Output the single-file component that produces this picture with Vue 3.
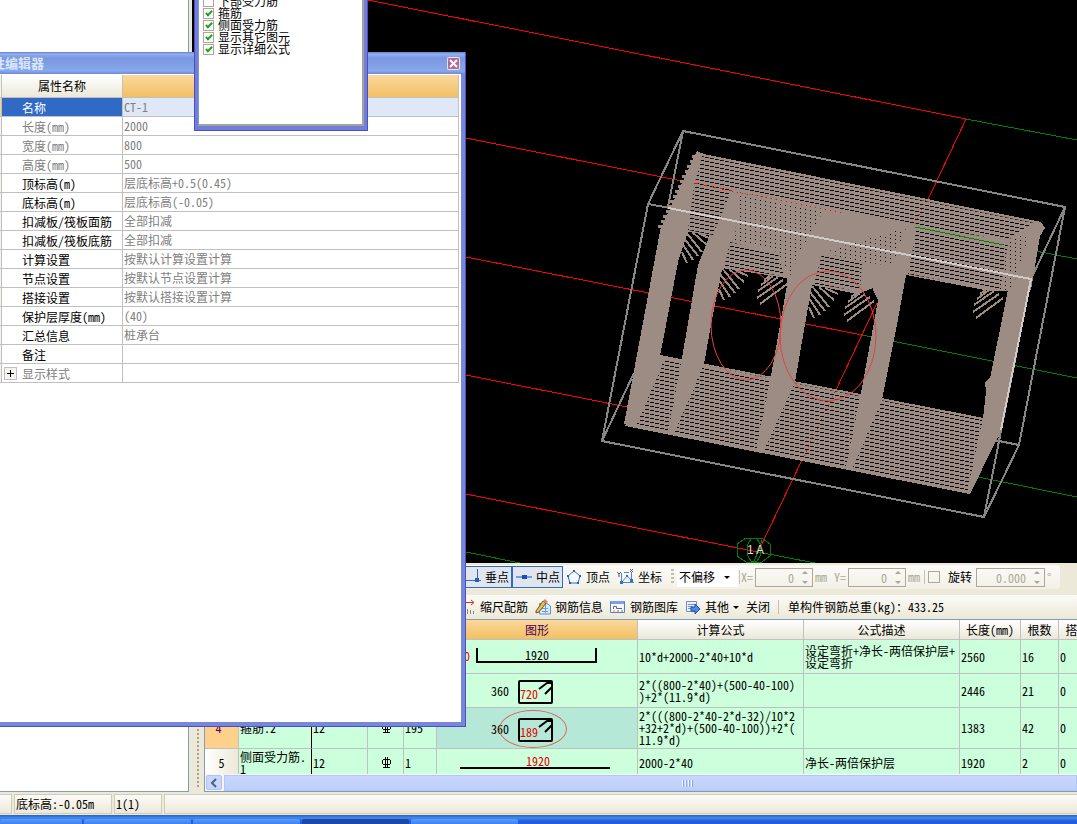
<template>
  <div class="desktop">
    <main class="workspace">
      <div class="tree-pane"></div>

      <div class="model-pane">
        <!-- 3D view -->
        <svg class="scene" viewBox="192 0 885 563" preserveAspectRatio="xMaxYMax slice" shape-rendering="crispEdges">
          <defs>
            <clipPath id="clip-base"><polygon points="660,357 983,420 968,492 628,424" /></clipPath>
            <clipPath id="clip-roof">
              <polygon points="702,156 1034,223 1008,240 915,226 732,189 713,235 688,230 694,186" />
              <polygon points="917,226 1008,244 1000,290 908,274" />
              <polygon points="730,242 778,254 784,276 724,268" />
              <polygon points="822,254 862,262 860,291 814,284" />
            </clipPath>
            <clipPath id="clip-dots">
              <polygon points="738,192 824,210 800,252 790,276 778,252 735,240" />
              <polygon points="906,228 892,266 838,258 830,250" />
              <polygon points="1002,244 1030,232 1012,290 1000,290" />
            </clipPath>
          </defs>

          <!-- axis grid -->
          <g class="axis red">
            <path d="M368 0L966 119L915 227" />
            <path d="M466 138L682 181" />
            <path d="M466 257L862 335M877 303L835 392" />
            <path d="M466 375L627 407" />
            <path d="M466 494L758 552L802 460" />
          </g>
          <g class="axis green">
            <path d="M966 119L1077 140M1004 245L1077 259M862 335L1077 378M978 477L1077 497M758 552L815 563M466 552L520 563" />
          </g>

          <!-- bounding box, far edges -->
          <path class="box" d="M683 131L1065 207L1019 445L984 517L602 441L648 204ZM683 131L668 207M634 373L602 441M1019 445L994 440M1031 279L1065 207M1031 279L984 517M648 204L670 208" />

          <!-- stirrups -->
          <g class="steel">
            <polygon points="660,355 984,418 970,494 625,426" />
            <polygon :points="roof" />
            <polygon v-for="leg in legs" :key="leg" :points="leg" />
            <path class="teeth" :d="teeth" />
            <path class="hooks" :d="hooks" />
          </g>
          <g clip-path="url(#clip-base)">
            <path v-for="y in baseRows" :key="y" class="gap" :d="`M620 ${y}L990 ${y + 74}`" />
          </g>
          <g clip-path="url(#clip-roof)">
            <path v-for="y in roofRows" :key="y" class="gap" :d="`M680 ${y}L1050 ${y + 74}`" />
          </g>
          <g clip-path="url(#clip-dots)">
            <path v-for="y in roofRows" :key="y" class="dots" :d="`M680 ${y}L1050 ${y + 74}`" />
          </g>
          <g class="steel">
            <polygon v-for="web in webs" :key="web" :points="web" />
          </g>

          <path class="axis red dashed" d="M694 183L732 191" />
          <path class="axis red dotted" d="M732 191L845 213M926 200L915 225" />
          <path class="axis red dotted" d="M835 392L802 460" />
          <path class="axis green" d="M915 227L1004 245" />
          <path class="box near" d="M668 208L1031 279L1001 430" />

          <g class="mark" shape-rendering="auto">
            <ellipse cx="746" cy="325" rx="35" ry="55" />
            <ellipse cx="828" cy="336" rx="48" ry="65" />
          </g>
          <g class="axis green">
            <path d="M746 538H762L770 544V556L762 562H746L737 556V544Z" />
            <ellipse cx="754" cy="550" rx="7" ry="12" />
            <path d="M754 562L762 540" />
          </g>
          <text x="747" y="554" class="axis-name">1</text>
          <text x="756" y="554" class="axis-name">A</text>
        </svg>

        <!-- snap toolbar -->
        <div class="snap-row">
          <div class="snap-bar">
            <button class="snap on">
              <svg width="16" height="16" viewBox="0 0 16 16"><path d="M0 11.5H16M12.5 0V11" stroke="#316ac5" stroke-width="1" fill="none" /><path d="M10 9h4v4h-4z" fill="#2a5db8" /></svg>
              <span>垂点</span>
            </button>
            <button class="snap on">
              <svg width="16" height="16" viewBox="0 0 16 16"><path d="M0 8H16" stroke="#6fa0e0" stroke-width="2" /><path d="M6 6h5v4H6z" fill="#1c4fb0" /></svg>
              <span>中点</span>
            </button>
            <button class="snap">
              <svg width="16" height="16" viewBox="0 0 16 16"><path d="M8 2L14 7L12 14H4L2 7Z" stroke="#2f6fc8" fill="#f4faff" /><path d="M7 1h2v2H7zM13 6h2v2h-2zM11 13h2v2h-2zM3 13h2v2H3zM1 6h2v2H1z" fill="#1f5fc0" /></svg>
              <span>顶点</span>
            </button>
            <button class="snap">
              <svg width="17" height="16" viewBox="0 0 17 16"><path d="M4.5 4V13.5H17M5 13L10 7L14.5 11V3M7 3.5H12" stroke="#4a87d6" fill="none" /><path d="M0 3L2 5L4 3M2 5V8M13 0L16 3M16 0L13 3" stroke="#555" fill="none" /><path d="M3 12h3v3H3zM9 6h2v2H9zM13 10h3v3h-3z" fill="#2f6fc8" /></svg>
              <span>坐标</span>
            </button>
            <i class="grip"></i>
            <label class="offset">
              <select aria-label="偏移方式"><option>不偏移</option></select>
              <i class="arrow"></i>
            </label>
            <i class="sep"></i>
            <label class="field" v-for="f in offsets" :key="f.label">
              <span>{{ f.label }}</span>
              <span class="spin"><input type="text" :value="f.value" disabled /><i class="up"></i><i class="down"></i></span>
              <span>mm</span>
            </label>
            <i class="sep"></i>
            <label class="turn"><input type="checkbox" /><span>旋转</span></label>
            <span class="spin wide"><input type="text" value="0.000" aria-label="旋转角度" disabled /><i class="up"></i><i class="down"></i></span>
            <span class="degree">°</span>
          </div>
        </div>

        <div class="grid-row">
          <div class="dock"><i class="dock-grip"></i></div>
          <section class="grid-panel">
            <div class="rebar-bar">
              <button>
                <svg width="14" height="16" viewBox="0 0 14 16"><path d="M0 3.5H11M9 1L12 3.5L9 6" stroke="#d03020" fill="none" /><path d="M2.5 8V15M5.5 10V15M8.5 11V15M11.5 12V15" stroke="#888" /></svg>
                <span>缩尺配筋</span>
              </button>
              <button>
                <svg width="16" height="16" viewBox="0 0 16 16"><path d="M4.5 4.5H12L15.5 7V15H4.5Z" fill="#dceafb" stroke="#5a8fd0" /><path d="M7 9.5H13M7 12.5H13M10.5 5V14" stroke="#6f9fd8" /><path d="M1 12L8 2L11 4L4 13L1 14Z" fill="#f0c040" stroke="#6b5530" /><path d="M8 2L10 0L13 3L11 4Z" fill="#e08070" /></svg>
                <span>钢筋信息</span>
              </button>
              <button>
                <svg width="16" height="16" viewBox="0 0 16 16"><path d="M.5 2.5H14.5V13.5H.5Z" fill="#f4f8fe" stroke="#5a7fb8" /><path d="M1 2H14V5H1Z" fill="#76a3e2" /><path d="M3.5 10V7.5H6.5V9.5H12" stroke="#667" fill="none" /><path d="M3 12H5" stroke="#e0a020" /><path d="M7 12H9" stroke="#d05050" /><path d="M11 12H13" stroke="#40a050" /></svg>
                <span>钢筋图库</span>
              </button>
              <button>
                <svg width="16" height="16" viewBox="0 0 16 16"><path d="M1.5 2.5H11.5V12.5H1.5Z" fill="#e8f0fb" stroke="#7090c0" /><path d="M3 5.5H10M3 7.5H8M3 9.5H6" stroke="#7d94bd" /><path d="M6 8H10V5L15 10L10 15V12H6Z" fill="#4a8ae8" stroke="#1f4fa8" /></svg>
                <span>其他</span><i class="arrow"></i>
              </button>
              <button><span>关闭</span></button>
              <i class="sep"></i>
              <span class="total">单构件钢筋总重(kg)：433.25</span>
            </div>

            <div class="table-clip">
              <table class="rebar">
                <colgroup>
                  <col v-for="(w, i) in widths" :key="i" :style="{ width: w + 'px' }" />
                </colgroup>
                <thead>
                  <tr>
                    <th></th><th></th><th></th><th></th><th></th>
                    <th class="active">图形</th>
                    <th>计算公式</th><th>公式描述</th><th>长度(mm)</th><th>根数</th><th>搭接</th>
                  </tr>
                </thead>
                <tbody>
                  <tr v-for="row in rows" :key="row.no" :class="['r' + row.no, { current: row.current }]">
                    <td class="no">{{ row.no }}{{ row.current ? '*' : '' }}</td>
                    <td class="name">{{ row.name }}</td>
                    <td>{{ row.dia }}</td>
                    <td class="grade">
                      <svg v-if="row.dia" width="11" height="11" viewBox="0 0 11 11"><path d="M2 2.5H9M2 7.5H9M1.5 3V7M9.5 3V7M4.5 0V10M6.5 0V10M2 10.5H9" fill="none" stroke="#000" shape-rendering="crispEdges" /></svg>
                    </td>
                    <td>{{ row.figNo }}</td>
                    <td class="figure">
                      <svg v-if="row.shape === 'line'" width="200" height="27" viewBox="437 0 200 27">
                        <path d="M460 19H610" class="bar" />
                        <text x="526" y="17" class="dim">1920</text>
                      </svg>
                      <svg v-else width="200" height="33" viewBox="437 0 200 33">
                        <g v-if="row.shape === 'u'">
                          <path d="M477 8V22H596V8" class="bar" />
                          <text x="525" y="20">1920</text>
                          <text x="452" y="21" class="dim">120</text>
                        </g>
                        <g v-else>
                          <rect x="519" y="7" width="33" height="22" rx="1" class="bar" />
                          <path d="M539 15L547 9H552M545 20L552 13" class="bar" />
                          <text x="491" y="22">360</text>
                          <text x="520" y="25" class="dim">{{ row.dim }}</text>
                        </g>
                      </svg>
                      <i v-if="row.current" class="ring"></i>
                    </td>
                    <td><div v-for="line in row.formula" :key="line">{{ line }}</div></td>
                    <td><div v-for="line in row.desc" :key="line">{{ line }}</div></td>
                    <td>{{ row.length }}</td>
                    <td>{{ row.count }}</td>
                    <td>0</td>
                  </tr>
                </tbody>
              </table>
            </div>

            <div class="hscroll">
              <button aria-label="向左滚动"><svg width="8" height="10" viewBox="0 0 8 10"><path d="M6 1L2 5L6 9" stroke="#4d6185" stroke-width="2" fill="none" /></svg></button>
              <div class="thumb"><i></i><i></i><i></i><i></i></div>
            </div>
          </section>
        </div>
      </div>
    </main>

    <footer class="status">
      <span class="cell edge"></span>
      <span class="cell level">底标高:-0.05m</span>
      <span class="cell num">1(1)</span>
      <span class="cell rest"></span>
    </footer>
    <nav class="taskbar">
      <i v-for="n in 5" :key="n" :class="['task', 't' + n]"></i>
    </nav>

    <!-- property editor window -->
    <section class="editor">
      <header>
        <h2>性编辑器</h2>
        <button aria-label="关闭"><svg width="13" height="13" viewBox="0 0 13 13"><rect x="0" y="0" width="13" height="13" rx="2" fill="#dfe6f8" /><rect x="1" y="1" width="11" height="11" rx="1" fill="#b5698f" /><path d="M3 3L10 10M10 3L3 10" stroke="#fff" stroke-width="2" /></svg></button>
      </header>
      <div class="client">
        <table class="props">
          <thead>
            <tr><th class="handle"></th><th class="key">属性名称</th><th class="active"></th></tr>
          </thead>
          <tbody>
            <tr v-for="p in props" :key="p.name" :class="{ selected: p.selected, muted: p.muted }">
              <td class="handle"></td>
              <td class="key"><button v-if="p.group" class="expand" aria-label="展开"></button>{{ p.name }}</td>
              <td class="value">{{ p.value }}</td>
            </tr>
          </tbody>
        </table>
      </div>
    </section>

    <!-- display options popup -->
    <section class="options">
      <div class="options-list">
        <label v-for="o in options" :key="o.text">
          <input type="checkbox" v-model="o.checked" /><span>{{ o.text }}</span>
        </label>
      </div>
    </section>
  </div>
</template>

<script setup>
import { ref } from 'vue'

const options = ref([
  { text: '下部受力筋', checked: false },
  { text: '箍筋', checked: true },
  { text: '侧面受力筋', checked: true },
  { text: '显示其它图元', checked: true },
  { text: '显示详细公式', checked: true }
])

const props = [
  { name: '名称', value: 'CT-1', selected: true },
  { name: '长度(mm)', value: '2000', muted: true },
  { name: '宽度(mm)', value: '800', muted: true },
  { name: '高度(mm)', value: '500', muted: true },
  { name: '顶标高(m)', value: '层底标高+0.5(0.45)' },
  { name: '底标高(m)', value: '层底标高(-0.05)' },
  { name: '扣减板/筏板面筋', value: '全部扣减' },
  { name: '扣减板/筏板底筋', value: '全部扣减' },
  { name: '计算设置', value: '按默认计算设置计算' },
  { name: '节点设置', value: '按默认节点设置计算' },
  { name: '搭接设置', value: '按默认搭接设置计算' },
  { name: '保护层厚度(mm)', value: '(40)' },
  { name: '汇总信息', value: '桩承台' },
  { name: '备注', value: '' },
  { name: '显示样式', value: '', muted: true, group: true }
]

const offsets = [
  { label: 'X=', value: '0' },
  { label: 'Y=', value: '0' }
]

const widths = [34, 73, 56, 36, 33, 201, 166, 156, 61, 38, 38]

const rows = [
  { no: 2, shape: 'u', formula: ['10*d+2000-2*40+10*d'], desc: ['设定弯折+净长-两倍保护层+', '设定弯折'], length: 2560, count: 16 },
  { no: 3, shape: 'hoop', dim: 720, formula: ['2*((800-2*40)+(500-40-100)', ')+2*(11.9*d)'], desc: [], length: 2446, count: 21 },
  { no: 4, current: true, name: '箍筋.2', dia: 12, figNo: 195, shape: 'hoop', dim: 189, formula: ['2*(((800-2*40-2*d-32)/10*2', '+32+2*d)+(500-40-100))+2*(', '11.9*d)'], desc: [], length: 1383, count: 42 },
  { no: 5, name: '侧面受力筋.1', dia: 12, figNo: 1, shape: 'line', formula: ['2000-2*40'], desc: ['净长-两倍保护层'], length: 1920, count: 2 }
]

// scene geometry
const range = (from, to, step) => Array.from({ length: Math.ceil((to - from) / step) }, (_, i) => from + i * step)
const baseRows = range(340, 430, 4)
const roofRows = range(152, 280, 4)

const roof = '697,151 704,154 1041,222 1045,228 1040,236 1031,290 990,291 906,275 858,294 812,285 786,278 722,268 712,236 684,231 661,228'
const legs = [
  '661,226 690,226 678,262 666,325 660,356 632,426 624,424',
  '727,192 740,230 722,270 711,325 704,364 674,434 668,432 682,358 698,265',
  '790,240 826,250 812,285 804,330 795,382 763,452 756,450 771,376 787,285',
  '860,262 914,228 906,275 896,330 882,400 852,469 846,467 861,393 878,300',
  '1018,240 1042,226 1029,292 1002,430 994,445 970,494 965,492 983,418 986,392 985,382 990,378 1006,300'
]
// solid parts of the side planes drawn over the stripes
const webs = [
  '660,355 666,356 636,427 624,424',
  '682,358 704,364 674,434 668,432',
  '771,376 795,382 763,452 756,450',
  '861,393 882,400 852,469 846,467',
  '983,418 1004,420 994,445 970,494 967,492'
]

const teeth = range(0, 15, 1)
  .map(i => `M${692 - Math.round(i * 2.4)} ${156 + i * 5}h8`)
  .join('')

const left = [[682, 252, 687, 263], [682, 243, 693, 260], [683, 237, 698, 256], [685, 231, 702, 252], [692, 232, 707, 245], [698, 233, 711, 239]]
const right = [[760, 304, 787, 284], [757, 298, 783, 280], [758, 291, 778, 277], [761, 285, 773, 276], [764, 280, 772, 274]]
const shift = (list, dx, dy) => list.map(([a, b, c, d]) => `M${a + dx} ${b + dy}L${c + dx} ${d + dy}`).join('')
const hooks = shift(left, 0, 0) + shift(left, 37, 37) + shift(left, 127, 55) +
  shift(right, 0, 0) + shift(right, 87, 17) + shift(right, 216, 14)
</script>

<style>
body {
  margin: 0;
}
</style>

<style scoped>
.desktop {
  position: relative;
  display: flex;
  flex-direction: column;
  height: 100vh;
  overflow: hidden;
  background: #ece9d8;
  color: #000;
  font: 12px/12px "Noto Sans Mono CJK SC", "Liberation Mono", "Noto Sans CJK SC", monospace;
}

button,
input,
select {
  font: inherit;
  color: inherit;
  margin: 0;
  padding: 0;
  border: 0;
  background: none;
}

svg {
  flex: none;
}

.workspace {
  flex: 1;
  min-height: 0;
  display: flex;
  gap: 3px;
}

.tree-pane {
  flex: none;
  box-sizing: border-box;
  width: 189px;
  background: #fff;
  border: solid #7f9db9;
  border-width: 0 1px 1px 0;
}

.model-pane {
  flex: 1;
  min-width: 0;
  display: flex;
  flex-direction: column;
}

/* 3D view */
.scene {
  flex: 1 1 0;
  min-height: 0;
  width: 100%;
  background: #000;
}

.axis {
  fill: none;
  stroke-width: 1;
}

.red { stroke: #f00; }
.green { stroke: #008000; }
.dashed { stroke-dasharray: 4 5; }
.dotted { stroke-dasharray: 1 4; }

.box {
  fill: none;
  stroke: #868686;
  stroke-width: 2;
}

.near { stroke: #d2cac6; }
.steel { fill: #9c8c84; }

.teeth {
  stroke: #9c8c84;
  stroke-width: 3;
}

.hooks {
  stroke: #9c8c84;
  stroke-width: 2;
}

.gap {
  stroke: #000;
  stroke-dasharray: 4.1 1;
}

.dots {
  stroke: #000;
  stroke-dasharray: 1 4.1;
}

.mark {
  fill: none;
  stroke: #e04444;
}

.axis-name {
  fill: #ddd;
  font: 12px "Liberation Sans", sans-serif;
}

/* toolbars */
.snap-row {
  flex: none;
  box-sizing: border-box;
  display: flex;
  height: 30px;
  padding-top: 2px;
}

.snap-bar {
  display: flex;
  align-items: center;
  height: 24px;
  padding: 0 8px 0 269px;
  background: linear-gradient(#fbfaf7, #f3f1e6);
  border-radius: 0 3px 3px 0;
}

.snap {
  box-sizing: border-box;
  display: flex;
  align-items: center;
  gap: 4px;
  height: 22px;
  width: 51px;
  padding: 0 3px;
  white-space: nowrap;
}

.snap.on {
  border: 1px solid #316ac5;
  background: #e1e6ee;
}

.grip {
  width: 3px;
  height: 16px;
  margin: 0 3px 0 6px;
  background: repeating-linear-gradient(#c1beb3 0 2px, transparent 2px 4px);
}

.offset {
  position: relative;
  display: flex;
  align-items: center;
  width: 61px;
  height: 19px;
  background: #fff;
}

.offset select {
  appearance: none;
  width: 100%;
  height: 19px;
  padding-left: 2px;
}

.arrow {
  border: 3px solid transparent;
  border-top-color: #000;
  border-bottom: 0;
}

.offset .arrow {
  position: absolute;
  right: 8px;
}

.sep {
  width: 1px;
  height: 14px;
  margin: 0 1px;
  background: #c5c2b8;
}

.field {
  display: flex;
  align-items: center;
  gap: 2px;
  color: #aca899;
}

.field + .field {
  margin: 0 3px 0 7px;
}

.spin {
  position: relative;
  box-sizing: border-box;
  display: flex;
  width: 58px;
  height: 19px;
  border: 1px solid #aca899;
  color: #aca899;
}

.spin.wide {
  width: 69px;
}

.spin input {
  width: 100%;
  padding-right: 18px;
  text-align: right;
}

.up,
.down {
  position: absolute;
  right: 4px;
  border: 3px solid transparent;
}

.up {
  top: 2px;
  border-bottom-color: #aca899;
  border-top: 0;
}

.down {
  bottom: 2px;
  border-top-color: #aca899;
  border-bottom: 0;
}

.turn {
  display: flex;
  align-items: center;
  gap: 8px;
  margin: 0 4px 0 2px;
}

.turn input {
  appearance: none;
  box-sizing: border-box;
  width: 12px;
  height: 12px;
  border: 1px solid #aca899;
}

.degree {
  color: #aca899;
  padding-left: 2px;
}

.grid-row {
  flex: none;
  display: flex;
}

.dock {
  flex: none;
  width: 12px;
  display: flex;
  justify-content: center;
  padding: 20px 0 4px;
}

.dock-grip {
  width: 2px;
  background: repeating-linear-gradient(#a5a297 0 2px, transparent 2px 4px);
}

.grid-panel {
  flex: 1;
  min-width: 0;
  margin-top: 2px;
}

.rebar-bar {
  display: flex;
  align-items: center;
  gap: 7px;
  height: 24px;
  padding-left: 258px;
  background: linear-gradient(#fbfaf7, #ece9d8);
  white-space: nowrap;
}

.rebar-bar button {
  display: flex;
  align-items: center;
  gap: 4px;
}

.total {
  padding-left: 1px;
}

/* rebar table */
.table-clip {
  height: 154px;
  overflow: hidden;
  border: solid #7f9db9;
  border-width: 1px 0 0 1px;
}

.rebar,
.props {
  table-layout: fixed;
  border-collapse: separate;
  border-spacing: 0;
}

.rebar {
  width: 892px;
}

.rebar th {
  height: 19px;
  padding: 0;
  font-weight: 400;
  background: linear-gradient(#fff, #ebe8d9);
  border: solid #c0c0c0;
  border-width: 0 1px 1px 0;
}

.rebar th.active,
.props th.active {
  color: #4b0055;
  background: linear-gradient(#fbd89c, #f2c062);
}

.rebar td {
  box-sizing: border-box;
  height: 34px;
  padding: 0 0 0 1px;
  background: #ccffdb;
  border: solid #c0c0c0;
  border-width: 0 1px 1px 0;
  white-space: nowrap;
}

.rebar .r4 td { height: 41px; }
.rebar .r5 td { height: 28px; }

.rebar .no {
  text-align: center;
  padding: 0;
  background: linear-gradient(90deg, #fff, #ece9d8);
}

.rebar .current .no {
  color: #4b0055;
  background: #fed18a;
}

.rebar .name {
  white-space: normal;
  word-break: break-all;
  border-right-color: #000;
}

.rebar .grade {
  text-align: center;
}

.rebar .figure {
  position: relative;
  padding: 0;
}

.rebar .current .figure {
  background: #b5e8d6;
}

.figure svg {
  display: block;
}

.figure .bar {
  fill: none;
  stroke: #000;
  stroke-width: 2;
}

.figure .dim { fill: #e80000; }

.ring {
  position: absolute;
  left: 62px;
  top: 2px;
  width: 66px;
  height: 36px;
  border: 1px solid #d86a5c;
  border-radius: 50%;
}

.hscroll {
  display: flex;
  gap: 2px;
  height: 16px;
  padding: 1px 0 0 1px;
  background: #f4f6fc;
  border: solid #7f9db9;
  border-width: 0 0 1px 1px;
}

.hscroll button {
  box-sizing: border-box;
  display: flex;
  align-items: center;
  justify-content: center;
  width: 16px;
  height: 15px;
  background: #c8d6fb;
  border: 1px solid #afc2f2;
  border-radius: 2px;
}

.thumb {
  flex: 1;
  display: flex;
  align-items: center;
  justify-content: center;
  gap: 1px;
  padding-left: 74px;
  background: linear-gradient(#c9d7fc, #bccffa);
  border: 1px solid #b4c6f2;
}

.thumb i {
  width: 1px;
  height: 7px;
  background: #eef3ff;
  border-right: 1px solid #8fa9e0;
}

/* status and task bars */
.status {
  flex: none;
  display: flex;
  gap: 2px;
  height: 20px;
  padding: 2px 0 1px;
}

.cell {
  box-sizing: border-box;
  padding: 3px 1px;
  border: 1px solid #d0cdbf;
  background: linear-gradient(#fcfbf8, #ece9d8);
}

.edge { width: 12px; border-left: 0; }
.level { width: 98px; }
.num { width: 48px; }
.rest { flex: 1; border-right: 0; }

.taskbar {
  flex: none;
  display: flex;
  gap: 2px;
  height: 5px;
  padding-top: 4px;
  background: linear-gradient(#2f5fb8, #3f8cf0 3px, #245edb 6px);
}

.task {
  width: 107px;
  background: linear-gradient(#5a9bfb, #3c81f3);
  border-radius: 2px 2px 0 0;
}

.t1 { width: 82px; }
.t4 { background: #1c49a8; }

/* property editor */
.editor {
  position: absolute;
  left: -10px;
  top: 52px;
  box-sizing: border-box;
  display: flex;
  flex-direction: column;
  width: 476px;
  height: calc(100vh - 149px);
  background: #7886dc;
  border: solid #4c50b8;
  border-width: 0 1px 1px 0;
}

.editor header {
  flex: none;
  display: flex;
  align-items: center;
  justify-content: space-between;
  height: 22px;
  padding: 0 5px 0 2px;
  background: linear-gradient(#5f7ccb, #93b1f0 2px, #7a97e0 6px, #86a8ec 19px, #6f86d8);
}

.editor h2 {
  margin: 0;
  color: #dae6fc;
  font-size: 13px;
  line-height: 16px;
}

.editor header button {
  display: flex;
}

.client {
  flex: 1;
  margin: 0 4px 4px 0;
  padding: 1px 2px 0 0;
  background: #fff;
}

.props {
  width: 100%;
}

.props th,
.props td {
  box-sizing: border-box;
  height: 19px;
  padding: 0 0 0 1px;
  border: solid #c0c0c0;
  border-width: 0 1px 1px 0;
  text-align: left;
  font-weight: 400;
}

.props th {
  height: 23px;
  padding: 0;
  text-align: center;
  background: linear-gradient(#fff, #ebe8d9);
}

.props .handle {
  width: 12px;
  padding: 0;
  background: #f6f4ea;
}

.props .key {
  width: 121px;
  position: relative;
}

.props td.key {
  padding: 1px 0 0 20px;
  white-space: nowrap;
}

.props .value {
  color: #808080;
}

.props .muted .key {
  color: #808080;
}

.props .selected .key {
  color: #fff;
  background: #316ac5;
}

.props .selected .value {
  background: #dfe8f6;
}

.props .selected .handle {
  background: #fed18a;
}

.expand {
  position: absolute;
  left: 2px;
  top: 3px;
  width: 13px;
  height: 13px;
  border: 1px solid #c0c0c0;
  background:
    linear-gradient(#000, #000) center / 7px 1px no-repeat,
    linear-gradient(#000, #000) center / 1px 7px no-repeat,
    #f6f4ee;
}

/* options popup */
.options {
  position: absolute;
  left: 194px;
  top: 0;
  box-sizing: border-box;
  width: 174px;
  height: 131px;
  padding: 0 3px 4px;
  overflow: hidden;
  background: #6f7edc;
  border: solid #4c50b8;
  border-width: 0 1px 1px;
}

.options-list {
  display: flow-root;
  box-sizing: border-box;
  height: 100%;
  padding-left: 4px;
  background: #fff;
  border: solid #a5a297;
  border-width: 0 2px 2px 1px;
  border-left-color: #7f9db9;
}

.options-list label {
  display: flex;
  align-items: center;
  gap: 4px;
  height: 12px;
}

.options-list label:first-child {
  margin-top: -5px;
}

.options-list input {
  appearance: none;
  position: relative;
  box-sizing: border-box;
  width: 11px;
  height: 11px;
  background: #fff;
  border: 1px solid #aca899;
}

.options-list input:checked::after {
  content: "";
  position: absolute;
  left: 3px;
  top: 0;
  width: 2px;
  height: 5px;
  border: solid #21a121;
  border-width: 0 2px 2px 0;
  transform: rotate(45deg);
}
</style>
